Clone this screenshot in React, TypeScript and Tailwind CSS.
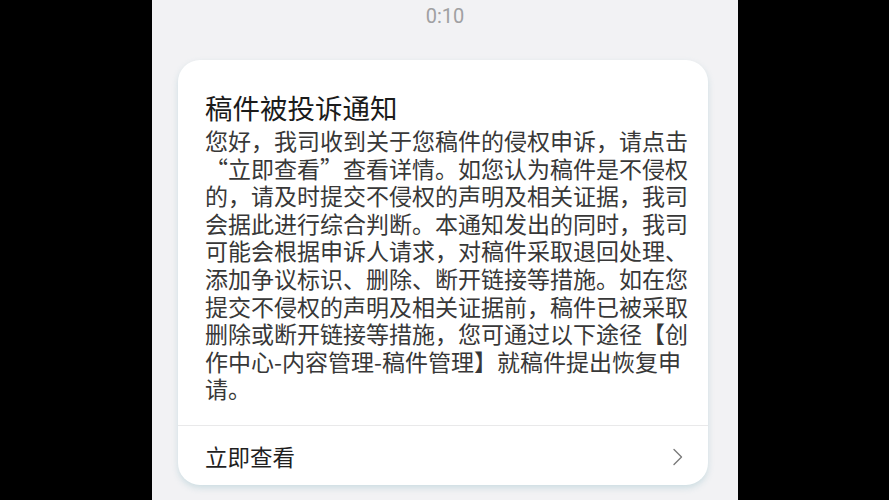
import React from "react";

const lines = [
  "您好，我司收到关于您稿件的侵权申诉，请点击",
  "“立即查看”查看详情。如您认为稿件是不侵权",
  "的，请及时提交不侵权的声明及相关证据，我司",
  "会据此进行综合判断。本通知发出的同时，我司",
  "可能会根据申诉人请求，对稿件采取退回处理、",
  "添加争议标识、删除、断开链接等措施。如在您",
  "提交不侵权的声明及相关证据前，稿件已被采取",
  "删除或断开链接等措施，您可通过以下途径【创",
  "作中心-内容管理-稿件管理】就稿件提出恢复申",
  "请。",
];

export default function App() {
  return (
    <div
      lang="zh-CN"
      className="flex w-[889px] h-[500px] bg-black overflow-hidden"
      style={{ fontFamily: '"Noto Sans CJK SC", "Noto Sans", sans-serif' }}
    >
      <div className="ml-[152px] w-[586px] h-full bg-[#f2f2f4] flex flex-col">
        <div
          className="h-[31px] flex items-center justify-center text-[20px] text-[#a0a0a2]"
          style={{ fontFamily: 'Roboto, "Noto Sans", sans-serif' }}
        >
          0:10
        </div>
        <div className="mt-[29px] ml-[26px] w-[530px] h-[425px] bg-white rounded-[22px] shadow-[0_3px_6px_rgba(160,195,205,0.45)] flex flex-col">
          <div className="pl-[27px] pt-[29px] flex-1">
            <div className="text-[27.5px] leading-[36px] text-[#1b1b1b] whitespace-nowrap">
              稿件被投诉通知
            </div>
            <div className="mt-[2px] text-[23px] leading-[27.6px] text-[#383838] whitespace-nowrap">
              {lines.map((l, i) => (
                <div key={i}>{l}</div>
              ))}
            </div>
          </div>
          <div className="h-px bg-[#e9e9ea]" />
          <div className="h-[59px] pt-[3px] pl-[27px] pr-[24px] flex items-center justify-between">
            <span className="text-[22.5px] text-[#1f1f1f]">立即查看</span>
            <svg width="12" height="18" viewBox="0 0 12 18" fill="none">
              <path d="M2 1.5 L9.5 9 L2 16.5" stroke="#7a7a7a" strokeWidth="1.4" strokeLinecap="round" strokeLinejoin="round" />
            </svg>
          </div>
        </div>
      </div>
    </div>
  );
}
